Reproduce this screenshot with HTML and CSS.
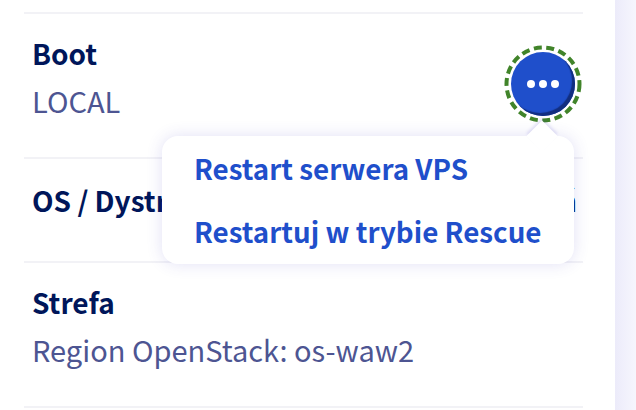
FILE: index.html
```html
<!DOCTYPE html>
<html lang="en">
<head>
  <meta charset="UTF-8" />
  <title>Serwer VPS</title>
  <link rel="stylesheet" href="styles.css">
</head>
<body>

<div class="page">
  <main class="panel">
    <div class="tile">
      <div class="tile-text">
        <h4>Boot</h4>
        <p>LOCAL</p>
      </div>
      <div class="menu-wrap">
        <button class="menu-btn" aria-label="Menu">
          <span class="dot"></span><span class="dot"></span><span class="dot"></span>
        </button>
        <svg class="menu-ring" width="78" height="78" viewBox="0 0 78 78">
          <circle cx="39" cy="39" r="36.5" fill="none" stroke="#41842a" stroke-width="4" stroke-dasharray="8 4.5"/>
        </svg>
        <div class="menu">
          <a href="#">Restart serwera VPS</a>
          <a href="#">Restartuj w trybie Rescue</a>
        </div>
      </div>
    </div>

    <div class="tile tile-short">
      <div class="tile-text">
        <h4>OS / Dystrybucja</h4>
      </div>
      <a class="tile-link" href="#">Zmień</a>
    </div>

    <div class="tile">
      <div class="tile-text">
        <h4>Strefa</h4>
        <p>Region OpenStack: os-waw2</p>
      </div>
    </div>
  </main>
  <aside class="side"></aside>
</div>

</body>
</html>
```

FILE: styles.css
```css
html, body { margin: 0; padding: 0; height: 100%; overflow: hidden; }
body { font-family: "Noto Sans CJK JP", "Noto Sans", sans-serif; background-color: white; color: #00165a; }
.page { display: flex; height: 410px; }
.panel { width: 559px; margin-left: 24px; padding-top: 12px; }
.side { width: 21px; margin-left: 32px; background: linear-gradient(to right, #ecebfa, #f6f6fd); }

.tile { display: flex; justify-content: space-between; align-items: center; height: 143px; padding: 0 8px 0 9px; border-top: 2px solid #f2f2f6; }
.tile:last-child { border-bottom: 2px solid #f2f2f6; }
.tile-short { height: 102px; }
.tile-text { margin-top: -18px; margin-left: -1px; }
.tile-short .tile-text { margin-top: -20px; }
h4 { margin: 0; font-size: 28px; line-height: 40px; font-weight: 700; color: #00165a; }
.tile-text p { margin: 7px 0 0; font-size: 29px; line-height: 40px; font-weight: 400; color: #4d5592; }
.tile-link { color: #00165a; font-size: 28px; font-weight: 700; text-decoration: none; margin-top: -20px; margin-right: -2px; }

.menu-wrap { position: relative; width: 64px; height: 64px; margin-top: -4px; }
.menu-btn { display: flex; align-items: center; justify-content: center; gap: 4px; width: 64px; height: 64px; padding: 0; border: none; border-radius: 50%; background-color: #1f4fcb; box-shadow: inset -3px -3px 1px #122e7f; }
.menu-ring { position: absolute; top: -7px; left: -7px; }
.dot { width: 8px; height: 8px; border-radius: 50%; background-color: white; }

.menu { position: absolute; top: 84px; right: 1px; width: 412px; height: 128px; box-sizing: border-box; display: flex; flex-direction: column; gap: 19px; padding: 10px 32px; background-color: white; border-radius: 16px; box-shadow: 0 0 16px rgba(70, 60, 190, 0.16); }
.menu::before { content: ""; position: absolute; top: -11px; right: 21px; width: 22px; height: 22px; background-color: white; transform: rotate(45deg); box-shadow: -2px -2px 3px rgba(70, 60, 190, 0.14); }
.menu a { position: relative; font-size: 27.75px; line-height: 44px; font-weight: 700; color: #1f4fcb; text-decoration: none; white-space: nowrap; }
```
